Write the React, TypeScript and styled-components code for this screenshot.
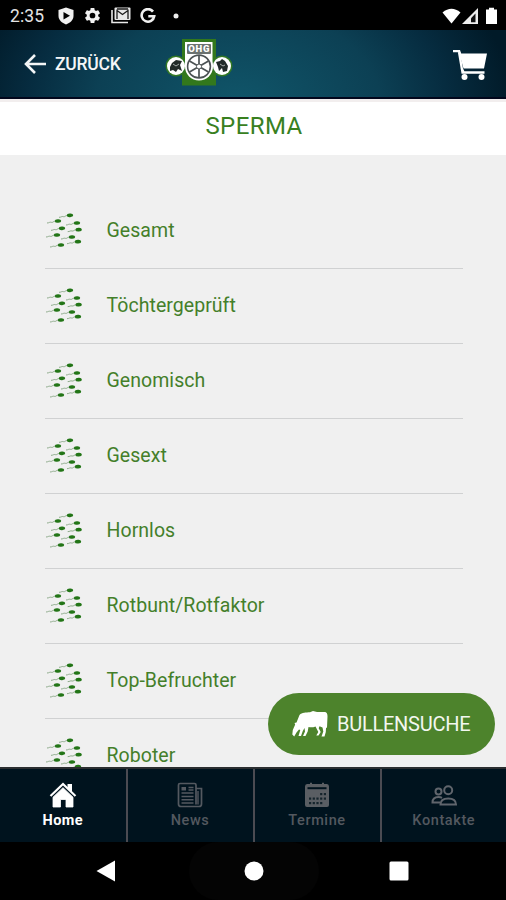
import React from "react";
import styled, { createGlobalStyle } from "styled-components";

const Global = createGlobalStyle`
  * { box-sizing: border-box; }
  body { margin: 0; background: #000; font-family: Roboto, "Liberation Sans", sans-serif; }
  svg { display: block; flex: none; }
`;

const Screen = styled.div`
  position: relative;
  width: 506px;
  height: 900px;
  display: flex;
  flex-direction: column;
  overflow: hidden;
  background: #f0f0f0;
`;

const StatusBar = styled.div`
  height: 30px;
  flex: none;
  display: flex;
  align-items: center;
  padding: 1px 8px 0 10px;
  background: #000;
  color: #e4e4e4;
`;
const Clock = styled.span`
  width: 48px;
  font-size: 17.5px;
  line-height: 28px;
  letter-spacing: 0.1px;
`;
const Notifications = styled.div`
  display: flex;
  align-items: center;
  gap: 9px;
`;
const Signals = styled.div`
  margin-left: auto;
  display: flex;
  align-items: center;
`;

const Header = styled.header`
  height: 69px;
  flex: none;
  display: flex;
  align-items: center;
  padding: 0 18px 0 24px;
  background: radial-gradient(ellipse 275px 190px at 238px 76px, #10566a 0%, #0c4054 52%, #062c40 76%, #011a28 100%);
  border-bottom: 2px solid #02071c;
`;
const Back = styled.div`
  display: flex;
  align-items: center;
  width: 141px;
  gap: 9px;
  padding-top: 1px;
  color: #f4f6f7;
  font-size: 17.5px;
  font-weight: 500;
  line-height: 24px;
  letter-spacing: -0.25px;
`;
const Cart = styled.div`
  margin-left: auto;
  padding-top: 2px;
`;

const Title = styled.h1`
  margin: 0;
  height: 56px;
  flex: none;
  background: #fff;
  border-top: 3px solid #f2eeee;
  color: #38801f;
  font-size: 24px;
  font-weight: 400;
  line-height: 49px;
  letter-spacing: 0.4px;
  text-align: center;
  padding-left: 2px;
`;

const List = styled.ul`
  list-style: none;
  margin: 0;
  padding: 38.6px 43px 0 45px;
  flex: 1;
  min-height: 0;
  overflow: hidden;
`;
const Item = styled.li`
  height: 75.05px;
  display: flex;
  align-items: center;
  gap: 23.5px;
  padding-bottom: 1px;
  border-bottom: 1px solid #d0d1d2;
  color: #447f2a;
  font-size: 19.5px;
  letter-spacing: 0.05px;
`;

const SearchButton = styled.button`
  position: absolute;
  left: 268px;
  top: 693px;
  width: 227px;
  height: 62px;
  display: flex;
  align-items: center;
  gap: 9px;
  padding: 0 0 0 24px;
  border: 0;
  border-radius: 31px;
  background: #4d832c;
  color: #f3f7f0;
  font: 400 20px Roboto, sans-serif;
  letter-spacing: -0.25px;
  white-space: nowrap;
`;

const Tabs = styled.nav`
  height: 75px;
  flex: none;
  display: grid;
  grid-template-columns: 127.5px 127px 127px 1fr;
  border-top: 2px solid #2b2e30;
  background: #00131e;
`;
const Tab = styled.div<{ $active?: boolean }>`
  display: flex;
  flex-direction: column;
  align-items: center;
  padding-top: 13px;
  gap: 3px;
  border-right: 2px solid #4b4b52;
  color: ${(p) => (p.$active ? "#fff" : "#53585f")};
  font-size: 14.5px;
  font-weight: ${(p) => (p.$active ? 700 : 500)};
  letter-spacing: ${(p) => (p.$active ? "0.4px" : "0.6px")};
  line-height: 20px;
  &:last-child { border-right: 0; }
`;

const SystemNav = styled.div`
  height: 58px;
  flex: none;
  display: grid;
  grid-template-columns: 189px 130px 1fr;
  align-items: center;
  background: #000;
`;
const SystemKey = styled.div<{ $pad: number; $lit?: boolean }>`
  height: 58px;
  display: flex;
  align-items: center;
  padding-left: ${(p) => p.$pad}px;
  background: ${(p) => (p.$lit ? "#040404" : "#000")};
  border-radius: 29px;
`;

const heads = [
  [90, 32], [54, 49], [111, 55], [66, 71], [116, 75], [51, 91], [96, 97], [114, 111], [63, 121],
];

const SpermIcon = () => (
  <svg width="38" height="36" viewBox="15 22 114 108">
    {heads.map(([x, y]) => (
      <g key={`${x}-${y}`} transform={`translate(${x} ${y})`}>
        <path d="M-7 1 C-14 -1 -15 6 -20 4 S-26 6 -33 6" fill="none" stroke="#86a683" strokeWidth="2.8" />
        <ellipse rx="9.5" ry="5.5" fill="#237517" transform="rotate(-4)" />
      </g>
    ))}
  </svg>
);

const ShieldIcon = () => (
  <svg width="16" height="18" viewBox="0 0 16 18">
    <path d="M8 .5 15.5 3v6c0 4-3.5 7-7.500 8.500C4 16 .5 13 .5 9V3Z" fill="#f1f1f1" />
    <path d="M5.500 5v7.500L12 8.700Z" fill="#000" />
  </svg>
);
const GearIcon = () => (
  <svg width="19" height="19" viewBox="0 0 24 24">
    <path
      fill="#f1f1f1"
      d="M19.140 12.940c.04-.3.060-.61.060-.94 0-.32-.02-.64-.070-.94l2.030-1.580a.49.49 0 0 0 .12-.61l-1.920-3.320a.488.488 0 0 0-.59-.22l-2.390.96c-.5-.38-1.030-.7-1.620-.94l-.36-2.540a.484.484 0 0 0-.48-.41h-3.840c-.24 0-.43.17-.47.41l-.36 2.540c-.59.24-1.130.57-1.620.94l-2.390-.96c-.22-.08-.47 0-.59.22L2.740 8.870c-.12.21-.08.47.12.61l2.030 1.580c-.05.3-.09.63-.09.94s.02.64.07.94l-2.030 1.580a.49.49 0 0 0-.12.61l1.920 3.320c.12.22.37.29.59.22l2.390-.96c.5.38 1.030.7 1.620.94l.36 2.540c.05.24.24.41.48.41h3.840c.24 0 .44-.17.47-.41l.36-2.540c.59-.24 1.130-.56 1.620-.94l2.390.96c.22.08.47 0 .59-.22l1.920-3.320c.12-.22.07-.47-.12-.61l-2.010-1.580zM12 15.600A3.600 3.600 0 1 1 12 8.400a3.600 3.600 0 0 1 0 7.200z"
    />
  </svg>
);
const MailIcon = () => (
  <svg width="20" height="17" viewBox="0 0 20 17">
    <path d="M1 3v12.500h16" fill="none" stroke="#e8e8e8" strokeWidth="1.600" />
    <rect x="3.500" y=".5" width="16" height="12.500" rx="1" fill="#e8e8e8" />
    <path d="M6 12V3.500l5.500 4 5.500-4V12M6 2h11" fill="none" stroke="#1b1b1b" strokeWidth="1.300" />
  </svg>
);
const GoogleIcon = () => (
  <svg width="16" height="16" viewBox="0 0 16 16">
    <path d="M13 3.600A6.300 6.300 0 1 0 14.200 8.300H8.300" fill="none" stroke="#f1f1f1" strokeWidth="2.600" />
  </svg>
);
const Dot = () => (
  <svg width="20" height="6" viewBox="0 0 20 6">
    <circle cx="11" cy="3" r="2.500" fill="#eee" />
  </svg>
);
const SignalIcons = () => (
  <svg width="56" height="18" viewBox="0 0 56 18">
    <path d="M.5 5.500Q9.500-2 18.500 5.500L9.500 16.500Z" fill="#fff" />
    <path d="M20 17 36 1v16Z" fill="#eee" />
    <path d="m29 15.200v-4l4.500-4.700v8.700Z" fill="#111" />
    <path d="M44 2.500h3V.7h5v1.800h3V17H44Z" fill="#fff" />
  </svg>
);

const ArrowIcon = () => (
  <svg width="22" height="20" viewBox="0 0 22 20">
    <path d="M11 1 2 10l9 9M2.500 10H22" fill="none" stroke="#f2f5f6" strokeWidth="2.600" />
  </svg>
);

const Logo = () => (
  <svg width="68" height="50" viewBox="0 0 68 50">
    <path d="M17 0h34v46.500H17Z" fill="#32781c" />
    <circle cx="11" cy="27" r="10.500" fill="#327825" />
    <circle cx="57" cy="27" r="10.500" fill="#327825" />
    <path d="M20 3h27.500v24H20Z" fill="#fff" />
    <circle cx="11" cy="27" r="9" fill="#fff" />
    <circle cx="57" cy="27" r="9" fill="#fff" />
    <circle cx="34" cy="27.500" r="14" fill="#fff" />
    <rect x="22" y="5" width="24" height="10" rx="1" fill="#6b7270" />
    <text x="23.200" y="13.400" fontFamily="Roboto" fontWeight="900" fontSize="9.500" letterSpacing="0.8" fill="#fff">OHG</text>
    <g fill="none" stroke="#4c5254">
      <circle cx="34" cy="27.500" r="11.400" strokeWidth="1.600" />
      <path d="M34 16.500v22M24.500 22l19 11M24.500 33l19-11" strokeWidth="1.700" />
    </g>
    <circle cx="34" cy="27.500" r="2.500" fill="#fff" stroke="#4c5254" />
    <path d="m5 28 2-4 4-3 6 1-2 4 2 6-4-2-2 3-3-2-3 1Z" fill="#222b29" />
    <path d="m51 23 4-1 2-2 3 2 3 5-1 5-4 1-1-4-3 3-1-4Z" fill="#222b29" />
    <path d="m8 25 3 2 3-2M55 25l3 2 2-1" fill="none" stroke="#a3aaa7" />
  </svg>
);

const CartIcon = () => (
  <svg width="36" height="32" viewBox="0 0 36 32">
    <path d="M1 1h7l1.200 3.500H35L32 19.500H11.500L7 3.200H1Z" fill="#fff" />
    <path d="M7 3 10.500 23.500h22M9.500 19l2 4" fill="none" stroke="#fff" strokeWidth="2.300" />
    <circle cx="12.500" cy="28" r="3" fill="#fff" />
    <circle cx="29.500" cy="28" r="3" fill="#fff" />
  </svg>
);

const CowIcon = () => (
  <svg width="36" height="28" viewBox="0 0 36 28">
    <path
      fill="#fff"
      d="M7.500 5C10 2 14 2.500 18 2.200l3-1.200 4 1h7c3 0 3.500 2 3.500 4.500l-.5 11-1 .5-.2 4-1.300 4.500H29.500l1.800-5-.8-4-3-1.300-.8 2 2 3.800-2.200 3.500h-2.200l2-3.500-2.800-5.500c-2.500 1-5 1-7 .5l-.8 4.500-2.200 4.500H11l2-4.500-.5-3.500-1.700 3-1.800 5H6.500l1.800-6-1.300-.5-2.500 3-2.300 4L.3 24.500.8 20 3.200 14.500 2.500 13l2-.5Z"
    />
  </svg>
);

const HomeIcon = () => (
  <svg width="28" height="26" viewBox="0 0 28 26">
    <path d="M18.500 2H23v8l-4.500-4Z" fill="#fff" />
    <path d="M1.500 14 14 2l12.500 12" fill="none" stroke="#fff" strokeWidth="2.200" />
    <path d="m14 5.700 10 9.500V25h-7v-7.500h-5.500V25H4V15.200Z" fill="#fff" stroke="#fff" strokeWidth=".8" strokeLinejoin="round" />
  </svg>
);
const NewsIcon = () => (
  <svg width="26" height="26" viewBox="0 0 26 26" fill="none" stroke="#545960" strokeWidth="1.700">
    <path d="M19 22.500V3q0-1.500-1.500-1.500H3Q1.500 1.500 1.500 3V22q0 2.500 2.500 2.500h18q2.500 0 2.500-2.500V6.500H19.500" />
    <path d="M21 9v13.500M4.500 11h12M4.500 14.500h12M4.500 17.800h12M4.500 21h12M11.500 5.500h5M11.500 8h5" strokeWidth="1.400" />
    <rect x="4.500" y="5" width="4.500" height="3.500" fill="#545960" stroke="none" />
  </svg>
);
const CalendarIcon = () => (
  <svg width="26" height="26" viewBox="0 0 26 26">
    <path d="M3 2h3V.8h2V2h10V.8h2V2h3q2 0 2 2.500V23q0 2-2 2H3q-2 0-2-2V4.500Q1 2 3 2Z" fill="#5a5e63" />
    <path d="M3.500 6.200h19" stroke="#00131e" strokeWidth="2" />
    <g fill="#15242c">
      {[11, 15.500, 20].map((y, r) =>
        [5, 8.700, 12.400, 16.100, 19.800].map((x, c) =>
          (r === 0 && c < 3) || (r === 2 && c > 3) ? null : <rect key={`${x}${y}`} x={x} y={y} width="2.200" height="2.200" />
        )
      )}
    </g>
  </svg>
);
const PeopleIcon = () => (
  <svg width="26" height="26" viewBox="0 0 26 26" fill="none" stroke="#60656c" strokeWidth="2">
    <circle cx="17.200" cy="8.300" r="4" />
    <circle cx="7.500" cy="9.500" r="3" />
    <path d="M9.500 22.500q0-6 7.700-6t7.800 6Z" />
    <path d="M9 20.500H1.500q0-5.500 6-5.500 2 0 3.500.8" />
  </svg>
);

const items = ["Gesamt", "Töchtergeprüft", "Genomisch", "Gesext", "Hornlos", "Rotbunt/Rotfaktor", "Top-Befruchter", "Roboter"];

export default function App() {
  return (
    <Screen>
      <Global />
      <StatusBar>
        <Clock>2:35</Clock>
        <Notifications>
          <ShieldIcon />
          <GearIcon />
          <MailIcon />
          <GoogleIcon />
          <Dot />
        </Notifications>
        <Signals><SignalIcons /></Signals>
      </StatusBar>
      <Header>
        <Back><ArrowIcon />ZURÜCK</Back>
        <Logo />
        <Cart><CartIcon /></Cart>
      </Header>
      <Title>SPERMA</Title>
      <List>
        {items.map((label) => (
          <Item key={label}><SpermIcon />{label}</Item>
        ))}
      </List>
      <SearchButton><CowIcon />BULLENSUCHE</SearchButton>
      <Tabs>
        <Tab $active><HomeIcon />Home</Tab>
        <Tab><NewsIcon />News</Tab>
        <Tab><CalendarIcon />Termine</Tab>
        <Tab><PeopleIcon />Kontakte</Tab>
      </Tabs>
      <SystemNav>
        <SystemKey $pad={96}>
          <svg width="20" height="22" viewBox="0 0 20 22"><path d="M.5 11 19 .5v21Z" fill="#fff" /></svg>
        </SystemKey>
        <SystemKey $pad={55} $lit>
          <svg width="20" height="20" viewBox="0 0 20 20"><circle cx="10" cy="10" r="9.500" fill="#fff" /></svg>
        </SystemKey>
        <SystemKey $pad={70}>
          <svg width="20" height="20" viewBox="0 0 20 20"><rect x=".5" y=".5" width="19" height="19" rx="1.500" fill="#fff" /></svg>
        </SystemKey>
      </SystemNav>
    </Screen>
  );
}
